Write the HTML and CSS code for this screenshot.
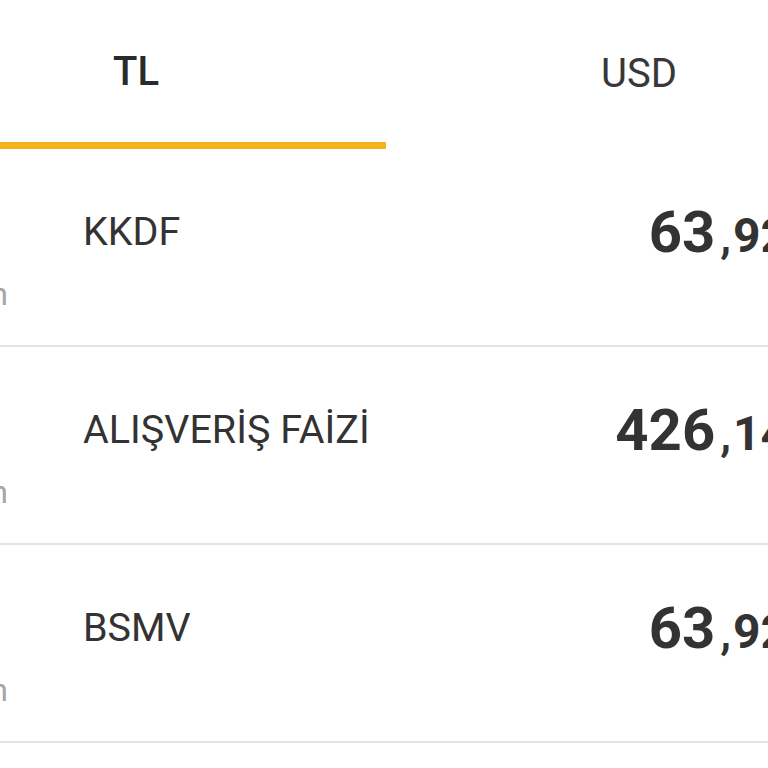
FILE: index.html
```html
<!DOCTYPE html>
<html lang="tr">
<head>
<meta charset="utf-8">
<title>Ödeme Detayı</title>
<link rel="stylesheet" href="styles.css">
</head>
<body>
<div class="screen">
  <div class="tabs">
    <div class="tab tab-active">
      <span class="tab-label">TL</span>
      <span class="tab-indicator"></span>
    </div>
    <div class="tab">
      <span class="tab-label">USD</span>
    </div>
  </div>

  <div class="list">
    <div class="row">
      <div class="aside"><span class="aside-text">Taksitsiz ödeme planın</span></div>
      <div class="label">KKDF</div>
      <div class="value"><span class="int">63</span><span class="sep">,</span><span class="dec">92</span></div>
    </div>
    <div class="row">
      <div class="aside"><span class="aside-text">Taksitsiz ödeme planın</span></div>
      <div class="label">ALIŞVERİŞ FAİZİ</div>
      <div class="value"><span class="int">426</span><span class="sep">,</span><span class="dec">14</span></div>
    </div>
    <div class="row">
      <div class="aside"><span class="aside-text">Taksitsiz ödeme planın</span></div>
      <div class="label">BSMV</div>
      <div class="value"><span class="int">63</span><span class="sep">,</span><span class="dec">92</span></div>
    </div>
  </div>
</div>
</body>
</html>
```

FILE: styles.css
```css
html, body {
  margin: 0;
  padding: 0;
  background: #ffffff;
}

body {
  width: 768px;
  height: 768px;
  overflow: hidden;
  font-family: Roboto, "Noto Sans", "Liberation Sans", sans-serif;
  color: #333333;
}

.screen {
  margin-left: -114px;
  width: 902px;
}

.tabs {
  display: flex;
  width: 1000px;
  height: 149px;
}

.tab {
  width: 500px;
  display: flex;
  flex-direction: column;
}

.tab-label {
  flex: 1;
  display: flex;
  align-items: center;
  justify-content: center;
  font-size: 40px;
  font-weight: 400;
  color: #383838;
  padding-bottom: 2px;
}

.tab-active .tab-label {
  font-weight: 500;
  color: #2a2a2a;
  padding-bottom: 0;
}

.tab + .tab .tab-label {
  padding-left: 6px;
}

.tab-indicator {
  display: block;
  height: 7px;
  background: #f4b41a;
}

.list {
  display: flex;
  flex-direction: column;
}

.row {
  height: 196px;
  border-bottom: 2px solid #e2e2e2;
  display: grid;
  grid-template-columns: 121px 1fr auto;
  column-gap: 77px;
  align-items: start;
}

.aside {
  overflow: hidden;
  white-space: nowrap;
  display: flex;
  justify-content: flex-end;
  padding-top: 125px;
  height: 40px;
}

.aside-text {
  font-size: 32px;
  line-height: 40px;
  color: #a6a6a6;
  margin-right: -1px;
}

.label {
  padding-top: 48px;
  font-size: 39.5px;
  line-height: 70px;
  color: #333333;
  margin-left: -1px;
}

.value {
  padding-top: 48px;
  line-height: 70px;
  font-weight: 700;
  color: #333333;
  white-space: nowrap;
  text-align: right;
}

.int {
  font-size: 58px;
}

.sep {
  font-size: 48px;
  font-weight: 500;
  margin-left: 5px;
  margin-right: 2px;
}

.dec {
  font-size: 48px;
}
```
